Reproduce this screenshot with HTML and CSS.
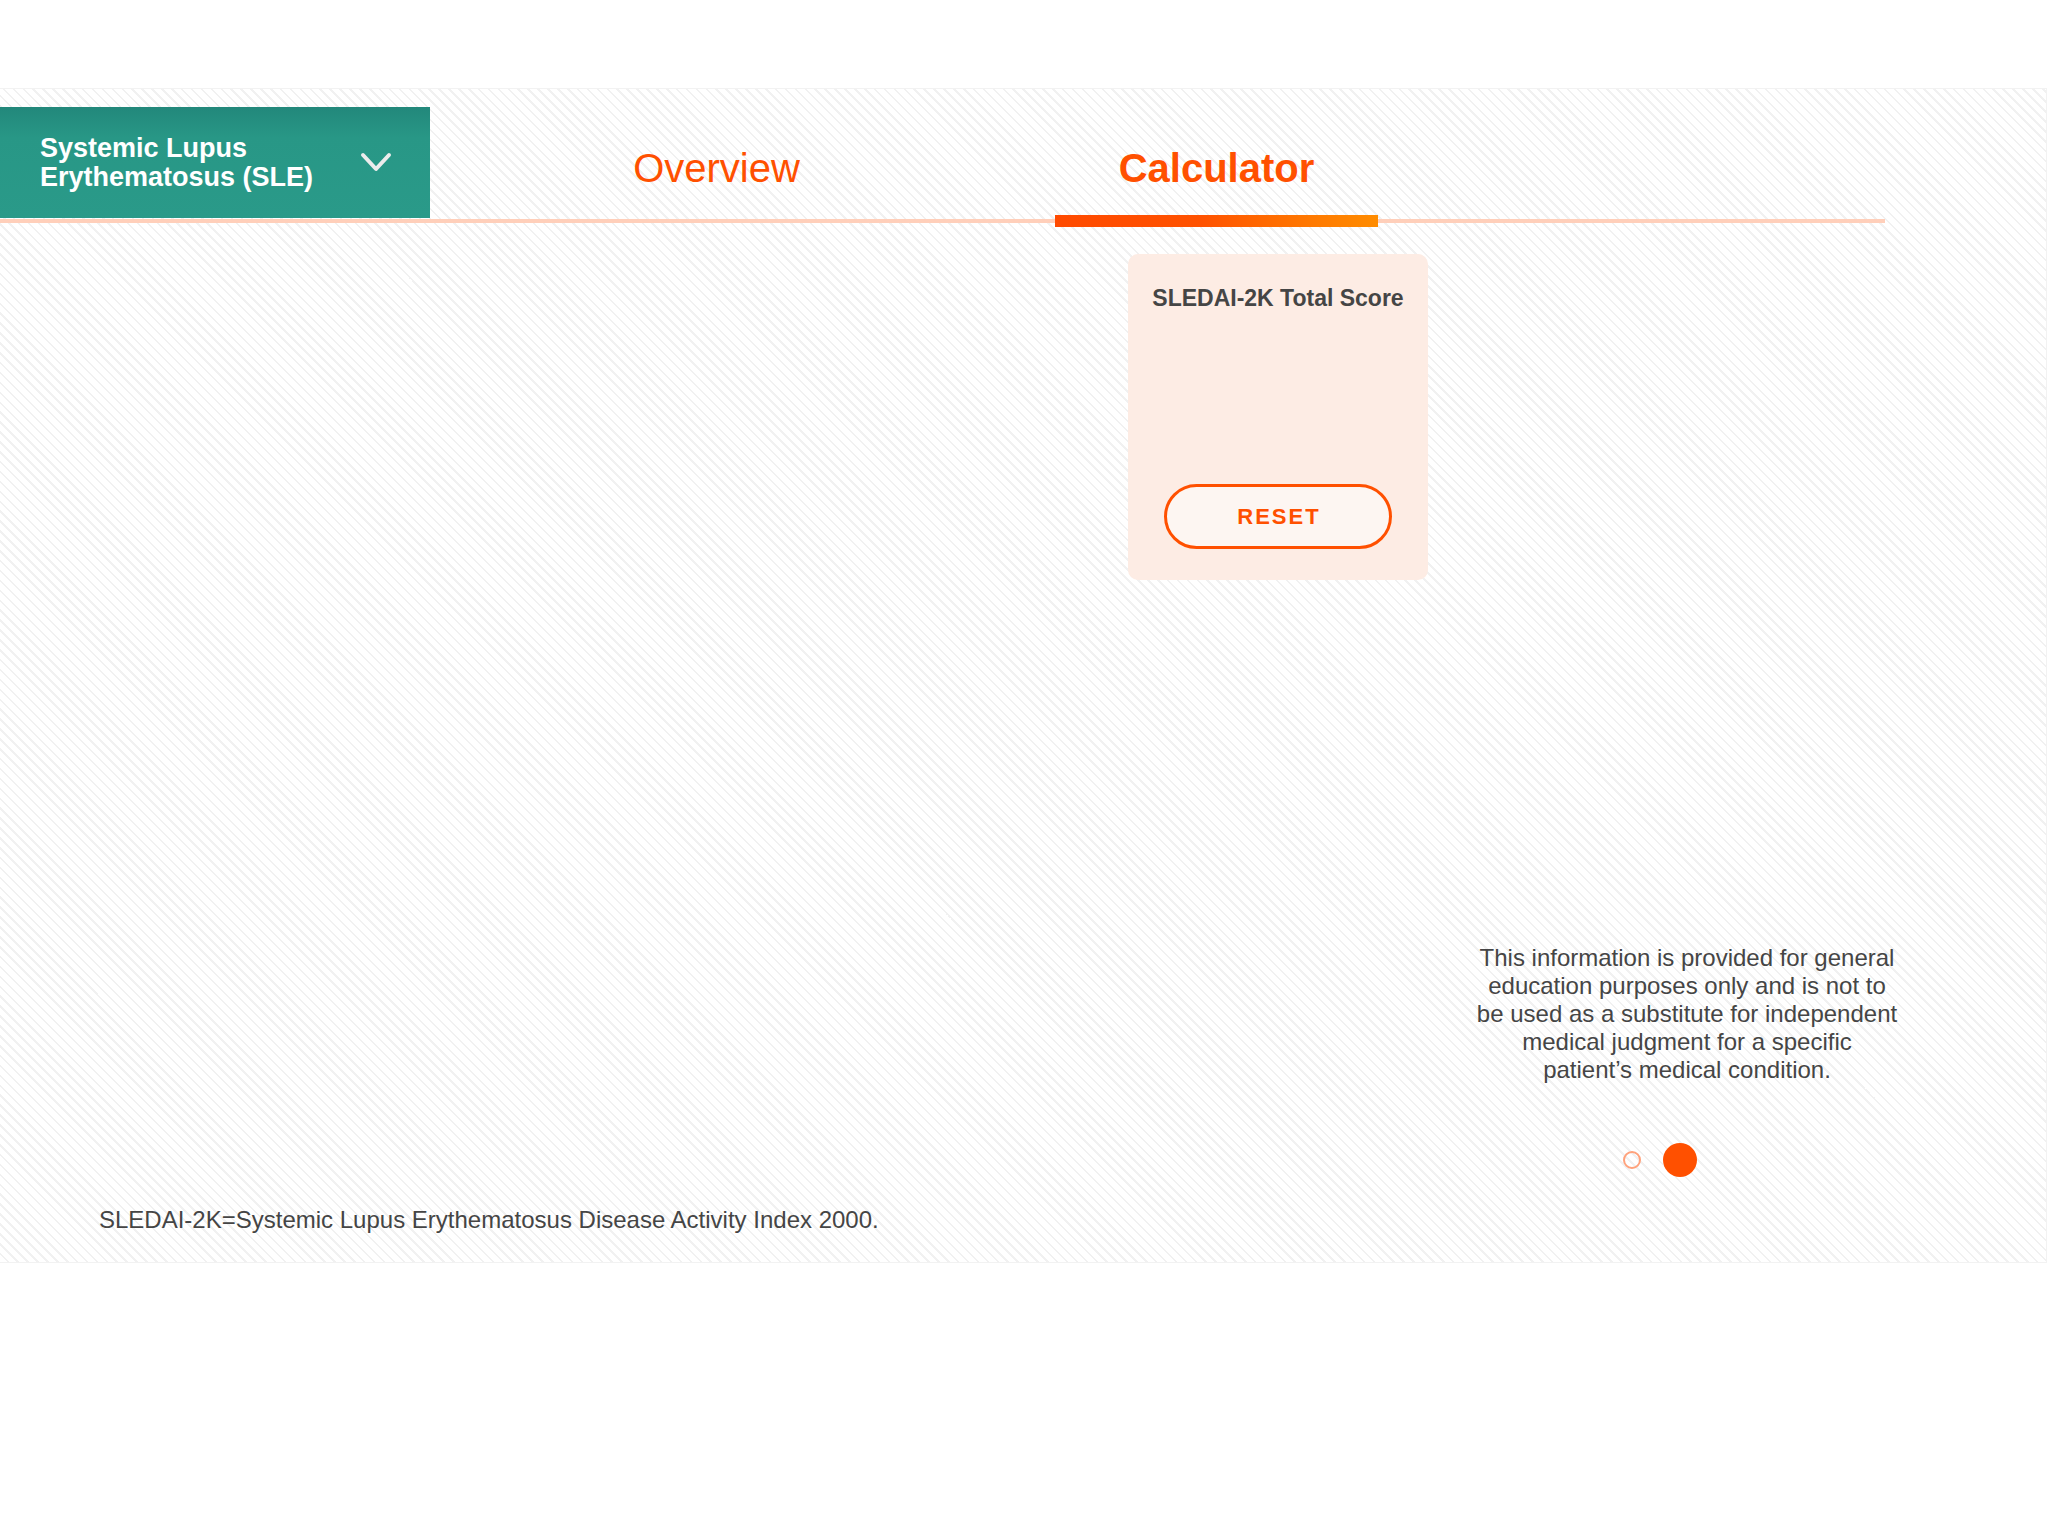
FILE: index.html
```html
<!DOCTYPE html>
<html lang="en">
<head>
<meta charset="utf-8">
<title>SLE Calculator</title>
<link rel="stylesheet" href="styles.css">
</head>
<body>
<div class="top-space"></div>
<main class="panel">
  <div class="topbar">
    <div class="disease-select">
      <div class="disease-name">Systemic Lupus<br>Erythematosus (SLE)</div>
      <svg class="chevron" width="34" height="22" viewBox="0 0 34 22"><path d="M4 4 L17 18 L30 4" fill="none" stroke="#ececec" stroke-width="4" stroke-linecap="round" stroke-linejoin="round"/></svg>
    </div>
    <nav class="tabs">
      <div class="tab">Overview</div>
      <div class="tab active">Calculator</div>
    </nav>
  </div>

  <section class="card-row">
    <div class="score-card">
      <div class="score-title">SLEDAI-2K Total Score</div>
      <button class="reset-btn">RESET</button>
    </div>
  </section>

  <aside class="aside">
    <p class="disclaimer">This information is provided for general education purposes only and is not to be used as a substitute for independent medical judgment for a specific patient’s medical condition.</p>
    <div class="dots">
      <span class="dot"></span>
      <span class="dot current"></span>
    </div>
  </aside>

  <p class="footnote">SLEDAI-2K=Systemic Lupus Erythematosus Disease Activity Index 2000.</p>
</main>
</body>
</html>
```
FILE: styles.css
```css
html, body {
  margin: 0;
  padding: 0;
  background: #ffffff;
}
body {
  font-family: "Liberation Sans", Arial, Helvetica, sans-serif;
  color: #454545;
}
.top-space {
  height: 88px;
}
.panel {
  box-sizing: border-box;
  width: 2047px;
  height: 1175px;
  border-top: 1px solid #f2f2f2;
  border-right: 1px solid #f2f2f2;
  border-bottom: 1px solid #f2f2f2;
  background-color: #ffffff;
  background-image: repeating-linear-gradient(45deg, #ffffff 0px, #ffffff 5px, #f1f1f1 5px, #f1f1f1 6.8px, #ffffff 6.8px, #ffffff 7px);
  display: flex;
  flex-direction: column;
  padding-top: 18px;
}
.topbar {
  display: flex;
  width: 1885px;
  height: 112px;
  border-bottom: 4px solid #ffcfba;
}
.disease-select {
  box-sizing: border-box;
  width: 430px;
  height: 111px;
  display: flex;
  align-items: center;
  justify-content: space-between;
  padding-left: 40px;
  padding-right: 37px;
  background: linear-gradient(180deg, #22887b 0%, #289786 28%, #2a9a89 100%);
  color: #ffffff;
}
.disease-name {
  font-size: 27px;
  font-weight: 700;
  line-height: 29px;
}
.chevron {
  display: block;
  margin-top: -2px;
}
.tabs {
  display: flex;
  gap: 177px;
  margin-left: 125px;
}
.tab {
  position: relative;
  width: 323px;
  box-sizing: border-box;
  padding-top: 38px;
  text-align: center;
  font-size: 40px;
  line-height: 46px;
  color: #ff5000;
}
.tab.active {
  font-weight: 700;
}
.tab.active::after {
  content: "";
  position: absolute;
  left: 0;
  right: 0;
  bottom: -8px;
  height: 12px;
  background: linear-gradient(90deg, #ff4a00 0%, #ff5200 45%, #ff7a00 80%, #ff8c00 100%);
}
.card-row {
  padding-left: 1128px;
  margin-top: 31px;
}
.score-card {
  box-sizing: border-box;
  width: 300px;
  height: 326px;
  border-radius: 10px;
  background: #fdece4;
  padding: 31px 0 31px;
  display: flex;
  flex-direction: column;
  align-items: center;
}
.score-title {
  font-size: 23px;
  font-weight: 700;
  line-height: 26px;
  color: #454545;
}
.reset-btn {
  margin-top: 173px;
  box-sizing: border-box;
  width: 228px;
  height: 65px;
  border: 3px solid #ff5000;
  border-radius: 33px;
  background: #fdf6f2;
  color: #ff5000;
  font-family: "Liberation Sans", Arial, Helvetica, sans-serif;
  font-size: 22px;
  font-weight: 700;
  letter-spacing: 2px;
  padding: 0 0 0 2px;
}
.aside {
  margin-left: 1475px;
  width: 424px;
  margin-top: 364px;
}
.disclaimer {
  margin: 0;
  font-size: 24px;
  line-height: 28px;
  text-align: center;
  color: #454545;
}
.dots {
  display: flex;
  align-items: center;
  gap: 22px;
  margin-top: 59px;
  padding-left: 148px;
  height: 34px;
}
.dot {
  box-sizing: border-box;
  width: 18px;
  height: 18px;
  border-radius: 50%;
  border: 2px solid #ffa27c;
}
.dot.current {
  width: 34px;
  height: 34px;
  border: none;
  background: #ff5000;
}
.footnote {
  margin: 29px 0 0;
  padding-left: 99px;
  font-size: 24px;
  line-height: 28px;
  color: #454545;
}
```
